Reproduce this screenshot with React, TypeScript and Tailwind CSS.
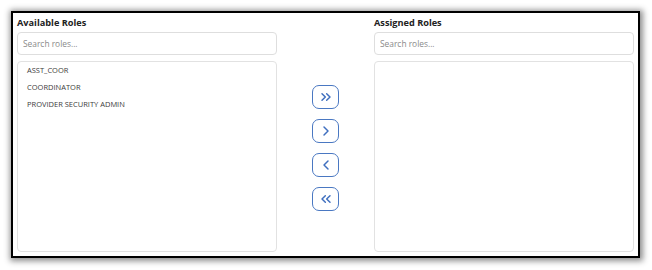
import { ChevronsRight, ChevronRight, ChevronLeft, ChevronsLeft } from "lucide-react";

const available = ["ASST_COOR", "COORDINATOR", "PROVIDER SECURITY ADMIN"];

function RolePanel({ title, roles }: { title: string; roles: string[] }) {
  return (
    <div className="flex w-[260px] flex-col">
      <h3 className="h-[18px] text-[9.2px] font-bold leading-[18px] text-[#222]">{title}</h3>
      <input
        placeholder="Search roles..."
        className="h-[23px] rounded-[4px] border border-[#dedede] px-[5px] text-[8.4px] text-[#444] outline-none placeholder:text-[#8a8a8a]"
      />
      <ul className="mt-[6px] h-[191px] rounded-[4px] border border-[#e2e2e2] pl-[9px]">
        {roles.map((r) => (
          <li key={r} className="text-[7.5px] leading-[17px] text-[#3c3c3c]">
            {r}
          </li>
        ))}
      </ul>
    </div>
  );
}

const buttons = [ChevronsRight, ChevronRight, ChevronLeft, ChevronsLeft];

export default function App() {
  return (
    <div className="h-[270px] w-[652px] bg-white pt-[11px] pl-[11px] font-['Open_Sans',sans-serif]">
      <div className="flex h-[247px] w-[629px] border-2 border-black bg-white px-[4px] pt-[1px] shadow-[1px_1px_6px_2px_rgba(0,0,0,0.45)]">
        <RolePanel title="Available Roles" roles={available} />
        <div className="flex flex-1 flex-col items-center gap-[10px] pt-[71px]">
          {buttons.map((Icon, i) => (
            <button
              key={i}
              className="flex h-[24px] w-[27px] items-center justify-center rounded-[7px] border-[1.5px] border-[#4a78c2] text-[#3f6fbf]"
            >
              <Icon size={16} strokeWidth={2.2} />
            </button>
          ))}
        </div>
        <RolePanel title="Assigned Roles" roles={[]} />
      </div>
    </div>
  );
}
